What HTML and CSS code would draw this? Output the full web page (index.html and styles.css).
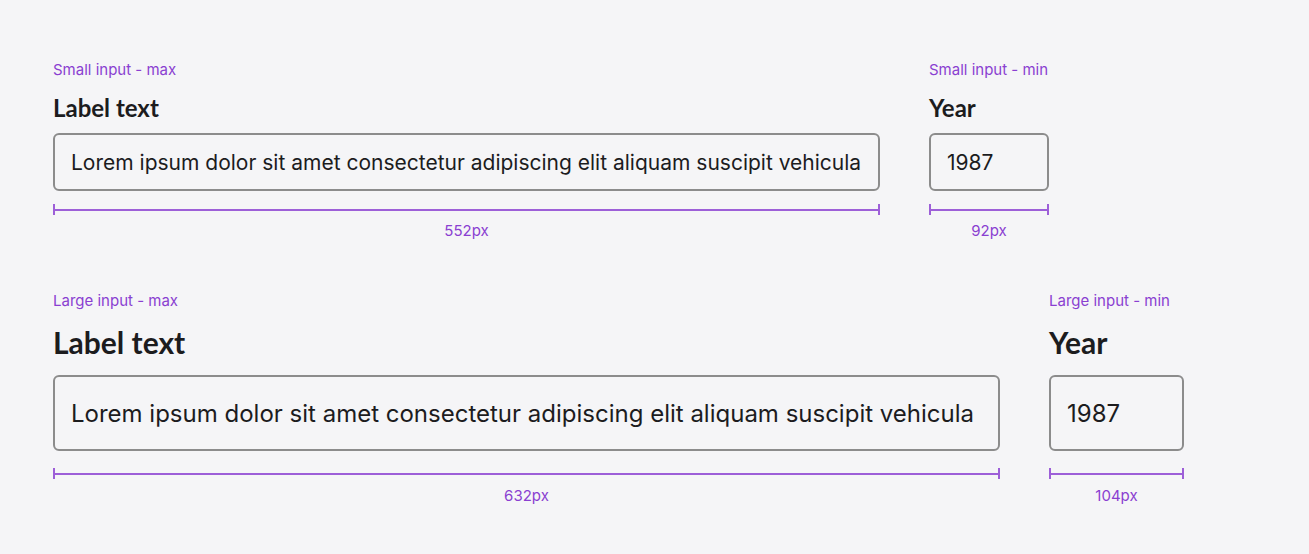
FILE: index.html
```html
<!DOCTYPE html>
<html>
<head>
<meta charset="utf-8">
<link rel="stylesheet" href="styles.css">
</head>
<body>
<div class="page">
  <div class="row row-small">
    <div class="field field-small-max">
      <div class="caption">Small input - max</div>
      <div class="label label-small">Label text</div>
      <div class="box box-small">Lorem ipsum dolor sit amet consectetur adipiscing elit aliquam suscipit vehicula</div>
      <div class="measure measure-small"><div class="rule"></div><div class="dim">552px</div></div>
    </div>
    <div class="field field-small-min">
      <div class="caption">Small input - min</div>
      <div class="label label-small">Year</div>
      <div class="box box-small">1987</div>
      <div class="measure measure-small"><div class="rule"></div><div class="dim">92px</div></div>
    </div>
  </div>
  <div class="row row-large">
    <div class="field field-large-max">
      <div class="caption">Large input - max</div>
      <div class="label label-large">Label text</div>
      <div class="box box-large">Lorem ipsum dolor sit amet consectetur adipiscing elit aliquam suscipit vehicula</div>
      <div class="measure measure-large"><div class="rule"></div><div class="dim">632px</div></div>
    </div>
    <div class="field field-large-min">
      <div class="caption">Large input - min</div>
      <div class="label label-large">Year</div>
      <div class="box box-large">1987</div>
      <div class="measure measure-large"><div class="rule"></div><div class="dim">104px</div></div>
    </div>
  </div>
</div>
</body>
</html>
```
FILE: styles.css
```css
* { box-sizing: border-box; }
html, body { margin: 0; padding: 0; }
body {
  background: #f5f5f7;
  width: 1309px;
  height: 554px;
  overflow: hidden;
  font-family: Inter, "Noto Sans", sans-serif;
  color: #1c1c1e;
}
.page {
  padding: 61px 0 0 53px;
  display: flex;
  flex-direction: column;
  gap: 52px;
}
.row {
  display: flex;
  gap: 49px;
}
.field {
  display: flex;
  flex-direction: column;
}
.field-small-max { width: 827px; }
.field-small-min { width: 120px; }
.field-large-max { width: 947px; }
.field-large-min { width: 135px; }

.caption {
  font-size: 15px;
  line-height: 18px;
  color: #8a3fd1;
  white-space: nowrap;
}
.label {
  font-family: Lato, "Liberation Sans", sans-serif;
  font-weight: 700;
  color: #1c1c1e;
  white-space: nowrap;
}
.label-small {
  font-size: 24px;
  line-height: 30px;
  margin-top: 14px;
  margin-bottom: 10px;
}
.label-large {
  font-size: 30px;
  line-height: 36px;
  margin-top: 14px;
  margin-bottom: 15px;
}
.box {
  border: 2px solid #8c8c8c;
  border-radius: 6px;
  display: flex;
  align-items: center;
  padding-left: 16px;
  white-space: nowrap;
  overflow: hidden;
  color: #1c1c1e;
}
.box-small {
  height: 58px;
  font-size: 21px;
}
.box-large {
  height: 76px;
  font-size: 24px;
}
.measure {
  display: flex;
  flex-direction: column;
  align-items: stretch;
}
.measure-small { margin-top: 13px; }
.measure-large { margin-top: 17px; }
.rule {
  height: 11px;
  border-left: 2px solid #9d5fd8;
  border-right: 2px solid #9d5fd8;
  background: linear-gradient(#9d5fd8, #9d5fd8) center / 100% 2px no-repeat;
}
.dim {
  margin-top: 7px;
  text-align: center;
  font-size: 15px;
  line-height: 18px;
  color: #8a3fd1;
}
.measure-large .dim { margin-top: 8px; }
```
